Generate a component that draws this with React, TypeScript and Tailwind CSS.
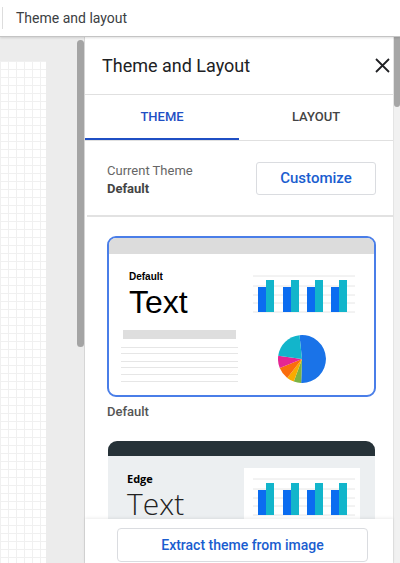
import React from 'react'

const font = { fontFamily: 'Roboto, "Liberation Sans", sans-serif' }

function Bars() {
  const groups = [5, 30, 54, 78]
  return (
    <svg width="102" height="38" viewBox="0 0 102 38">
      {[1, 11, 20, 28, 37].map((y) => (
        <line key={y} x1="0" x2="102" y1={y} y2={y} stroke="#e6e6e6" strokeWidth="1" />
      ))}
      {groups.map((x) => (
        <g key={x}>
          <rect x={x} y="12" width="8" height="25" fill="#0b6cf0" />
          <rect x={x + 8} y="5" width="8" height="32" fill="#12b5cb" />
        </g>
      ))}
    </svg>
  )
}

function Pie() {
  const slices: [number, number, string][] = [
    [-6, 182, '#1a73e8'],
    [182, 200, '#7cb342'],
    [200, 218, '#f9ab00'],
    [218, 248, '#fa6d0c'],
    [248, 278, '#e52592'],
    [278, 354, '#12b5cb'],
  ]
  const pt = (a: number) => {
    const r = (a * Math.PI) / 180
    return `${(24 + 24 * Math.sin(r)).toFixed(2)} ${(24 - 24 * Math.cos(r)).toFixed(2)}`
  }
  return (
    <svg width="48" height="48" viewBox="0 0 48 48">
      {slices.map(([a, b, c]) => (
        <path key={a} d={`M24 24 L${pt(a)} A24 24 0 ${b - a > 180 ? 1 : 0} 1 ${pt(b)} Z`} fill={c} />
      ))}
    </svg>
  )
}

export default function App() {
  return (
    <div className="w-[400px] h-[563px] flex flex-col overflow-hidden bg-white" style={font}>
      {/* top bar */}
      <div className="h-[37px] flex items-center border-b border-[#c4c4c4] shadow-[0_1px_2px_rgba(0,0,0,0.12)] relative z-10">
        <div className="w-px h-[22px] bg-[#ddd] ml-[2px]" />
        <span className="ml-[13px] text-[14px] text-[#3c4043]">Theme and layout</span>
      </div>

      <div className="flex-1 flex min-h-0">
        {/* canvas side */}
        <div className="w-[85px] flex bg-[#ececec] border-r border-[#d6d6d6]">
          <div className="w-[46px] pt-[24px]">
            <div className="h-full bg-white bg-[linear-gradient(#f0f0f0_1px,transparent_1px),linear-gradient(90deg,#f0f0f0_1px,transparent_1px)] bg-[size:8px_8px]" />
          </div>
          <div className="ml-[31px] pt-[3px]">
            <div className="w-[7px] h-[307px] rounded-full bg-[#a4a4a4]" />
          </div>
        </div>

        {/* panel */}
        <div className="flex-1 flex flex-col min-w-0">
          <div className="h-[58px] flex items-center justify-between pl-[17px] pr-[3px] border-b border-[#e0e0e0]">
            <span className="text-[18px] text-[#202124]">Theme and Layout</span>
            <svg width="15" height="15" viewBox="0 0 15 15">
              <path d="M1 1 L14 14 M14 1 L1 14" stroke="#202124" strokeWidth="1.8" />
            </svg>
          </div>

          <div className="h-[46px] flex border-b border-[#e0e0e0]">
            <div className="flex-1 flex items-center justify-center border-b-[2px] border-[#1f4fc4] text-[13px] font-medium text-[#1f4fc4] pt-[1px]">
              THEME
            </div>
            <div className="flex-1 flex items-center justify-center text-[13px] font-medium text-[#444] pb-[1px]">
              LAYOUT
            </div>
          </div>

          <div className="h-[74px] flex items-center justify-between pl-[22px] pr-[17px]">
            <div className="text-[13px] leading-[18px] pt-[4px]">
              <div className="text-[#666]">Current Theme</div>
              <div className="font-bold text-[#444]">Default</div>
            </div>
            <button className="w-[120px] h-[33px] border border-[#dadce0] rounded-[3px] text-[15px] font-medium text-[#1a5dcf]">
              Customize
            </button>
          </div>
          <div className="h-[2px] ml-[2px] bg-[#e2e2e2]" />

          <div className="flex-1 overflow-hidden pt-[19px] pl-[22px] pr-[17px]">
            {/* Default card */}
            <div className="h-[161px] rounded-[9px] border-2 border-[#4a7ee8] overflow-hidden flex flex-col">
              <div className="h-[16px] bg-[#dcdcdc]" />
              <div className="flex h-[67px]">
                <div className="w-[144px] pl-[20px] pt-[17px]">
                  <div className="text-[10px] font-bold leading-[12px] text-black" style={{ fontFamily: '"Liberation Sans", Arial, sans-serif' }}>Default</div>
                  <div className="text-[32px] leading-[32px] mt-[3px] text-black" style={{ fontFamily: '"Liberation Sans", Arial, sans-serif' }}>Text</div>
                </div>
                <div className="pt-[21px]">
                  <Bars />
                </div>
              </div>
              <div className="flex">
                <div className="w-[117px] ml-[12px] pt-[9px] flex flex-col">
                  <div className="h-[9px] bg-[#dedede] mx-[2px]" />
                  <div className="h-px bg-[#e6e6e6] mt-[8px]" />
                  <div className="h-px bg-[#e6e6e6] mt-[5px]" />
                  <div className="h-px bg-[#e6e6e6] mt-[7px]" />
                  <div className="h-px bg-[#e6e6e6] mt-[5px]" />
                  <div className="h-px bg-[#e6e6e6] mt-[6px]" />
                  <div className="h-px bg-[#e6e6e6] mt-[6px]" />
                </div>
                <div className="ml-[40px] pt-[14px]">
                  <Pie />
                </div>
              </div>
            </div>
            <div className="mt-[5px] text-[13px] font-medium text-[#555]">Default</div>

            {/* Edge card */}
            <div className="mt-[19px] mx-[1px] rounded-t-[9px] overflow-hidden bg-[#eceff1] h-[140px]">
              <div className="h-[15px] bg-[#263238]" />
              <div className="flex">
                <div className="w-[136px] pl-[19px] pt-[17px]">
                  <div className="text-[11px] font-bold leading-[12px] text-black" style={{ fontFamily: '"Open Sans", sans-serif' }}>Edge</div>
                  <div className="text-[30px] leading-[28px] mt-[5px] font-light text-[#222]" style={{ fontFamily: '"Open Sans", sans-serif' }}>Text</div>
                </div>
                <div className="mt-[12px] w-[116px] h-[80px] bg-white pl-[9px] pt-[10px]">
                  <Bars />
                </div>
              </div>
            </div>
          </div>

          <div className="h-[44px] pl-[32px] pr-[25px] pt-[9px] bg-white shadow-[0_-1px_3px_rgba(0,0,0,0.08)] relative">
            <button className="w-full h-[34px] border border-[#dadce0] rounded-[4px] text-[14px] font-medium text-[#1a5dcf]">
              Extract theme from image
            </button>
          </div>
        </div>

        {/* right scrollbar */}
        <div className="w-[7px] bg-[#f1f1f1] border-l border-[#e4e4e4]">
          <div className="h-[70px] bg-[#a6a6a6] rounded-b-[3px]" />
        </div>
      </div>
    </div>
  )
}
